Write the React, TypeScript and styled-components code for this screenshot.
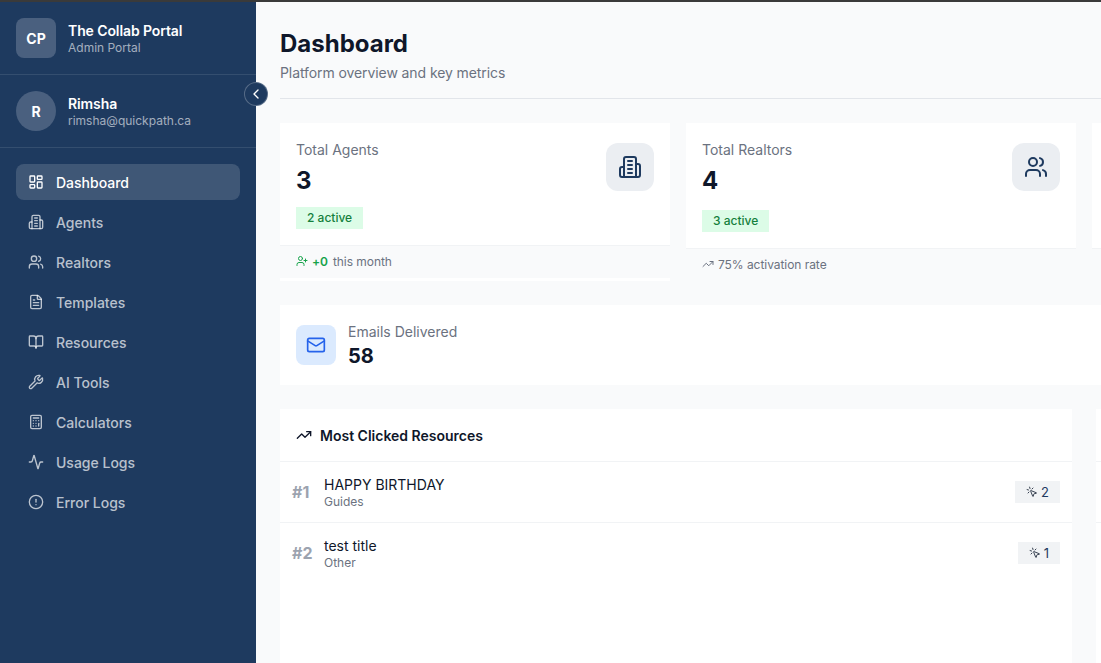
import React from 'react';
import styled, { createGlobalStyle } from 'styled-components';
import {
    Activity,
    BookOpen,
    Calculator,
    ChevronLeft,
    CircleAlert,
    FileText,
    LayoutDashboard,
    Mail,
    MousePointerClick,
    TrendingUp,
    UserPlus,
    Users,
    Wrench,
} from 'lucide-react';

const GlobalStyle = createGlobalStyle`
    html, body {
        margin: 0;
        height: 100%;
        overflow: hidden;
        background: #f9fafb;
    }
    body {
        font-family: Inter, "Liberation Sans", sans-serif;
    }
    * {
        box-sizing: border-box;
    }
`;

const Page = styled.div`
    width: 1101px;
    height: 663px;
    display: flex;
    flex-direction: column;
    overflow: hidden;
`;

const TopStrip = styled.div`
    height: 2px;
    flex: none;
    background: #3a3a3a;
`;

const Shell = styled.div`
    flex: 1;
    min-height: 0;
    display: flex;
    position: relative;
`;

const Sidebar = styled.aside`
    width: 256px;
    flex: none;
    background: #1e3a5f;
    color: #fff;
`;

const SideSection = styled.div`
    display: flex;
    align-items: center;
    gap: 12px;
    padding: 16px;
    height: 73px;
    border-bottom: 1px solid rgba(255, 255, 255, 0.1);
`;

const Avatar = styled.div<{ $round?: boolean }>`
    width: 40px;
    height: 40px;
    flex: none;
    display: flex;
    align-items: center;
    justify-content: center;
    background: #4a607f;
    border-radius: ${(p) => (p.$round ? '50%' : '8px')};
    font-size: 14px;
    font-weight: 700;
`;

const SideName = styled.div`
    font-size: 14px;
    line-height: 20px;
    font-weight: 600;
    letter-spacing: -0.1px;
`;

const SideSub = styled.div`
    font-size: 12px;
    line-height: 14px;
    color: rgba(255, 255, 255, 0.6);
`;

const Nav = styled.nav`
    display: flex;
    flex-direction: column;
    gap: 4px;
    padding: 16px;
`;

const NavItem = styled.a<{ $active?: boolean }>`
    height: 36px;
    display: flex;
    align-items: center;
    gap: 12px;
    padding: 0 12px;
    border-radius: 8px;
    font-size: 14px;
    font-weight: 500;
    color: ${(p) => (p.$active ? '#fff' : 'rgba(255, 255, 255, 0.7)')};
    background: ${(p) => (p.$active ? 'rgba(255, 255, 255, 0.15)' : 'transparent')};
`;

const Toggle = styled.button`
    position: absolute;
    left: 244px;
    top: 80px;
    width: 24px;
    height: 24px;
    padding: 0;
    display: flex;
    align-items: center;
    justify-content: center;
    border-radius: 50%;
    border: 1px solid rgba(255, 255, 255, 0.25);
    background: #1e3a5f;
    color: #fff;
`;

const Main = styled.main`
    flex: 1;
    min-width: 0;
    overflow: hidden;
    padding: 0 24px;
    background: #f9fafb;
`;

const Content = styled.div`
    width: 1608px;
`;

const Header = styled.header`
    height: 97px;
    padding-top: 26px;
    border-bottom: 1px solid #e2e5ea;
`;

const Title = styled.h1`
    margin: 0;
    font-size: 24px;
    line-height: 32px;
    font-weight: 700;
    color: #0f172a;
`;

const Subtitle = styled.p`
    margin: 3px 0 0;
    font-size: 14px;
    line-height: 20px;
    letter-spacing: -0.09px;
    color: #6b7280;
`;

const StatGrid = styled.div`
    display: grid;
    grid-template-columns: repeat(4, 390px);
    gap: 16px;
    margin-top: 24px;
`;

const StatCard = styled.section`
    background: #fff;
    display: flex;
    flex-direction: column;
    height: 158px;
`;

const StatBody = styled.div`
    display: flex;
    justify-content: space-between;
    align-items: flex-start;
    padding: 16px 16px 0;
`;

const StatLabel = styled.div`
    font-size: 14px;
    line-height: 20px;
    padding-top: 1px;
    color: #6b7280;
`;

const StatValue = styled.div`
    margin-top: 5px;
    font-size: 24px;
    line-height: 32px;
    font-weight: 700;
    color: #0f172a;
`;

const ActiveBadge = styled.span<{ $offset: number }>`
    display: inline-block;
    margin-top: ${(p) => p.$offset}px;
    padding: 0 11px;
    height: 22px;
    font-size: 12px;
    line-height: 22px;
    font-weight: 500;
    color: #15803d;
    background: #dcfce7;
`;

const IconTile = styled.div`
    width: 48px;
    height: 48px;
    margin-top: 4px;
    display: flex;
    align-items: center;
    justify-content: center;
    border-radius: 12px;
    background: #ebeef2;
    color: #1e3a5f;
`;

const StatFooter = styled.div<{ $below?: number }>`
    height: 33px;
    margin-top: auto;
    margin-bottom: ${(p) => p.$below ?? 0}px;
    display: flex;
    align-items: center;
    gap: 4px;
    padding: 0 16px 2px;
    border-top: 1px solid #f1f3f5;
    background: #f9fafb;
    font-size: 12px;
    letter-spacing: -0.05px;
    color: #6b7280;
`;

const Gain = styled.span`
    font-weight: 600;
    color: #16a34a;
    margin-right: 1px;
`;

const MailCard = styled.section`
    height: 80px;
    margin-top: 24px;
    padding: 0 16px;
    display: flex;
    align-items: center;
    gap: 12px;
    background: #fff;
`;

const MailTile = styled.div`
    width: 40px;
    height: 40px;
    display: flex;
    align-items: center;
    justify-content: center;
    border-radius: 8px;
    background: #dbeafe;
    color: #2563eb;
`;

const MailLabel = styled(StatLabel)`
    padding-top: 0;
    margin-bottom: 2px;
`;

const MailValue = styled.div`
    font-size: 20px;
    line-height: 24px;
    font-weight: 700;
    color: #0f172a;
`;

const Columns = styled.div`
    display: grid;
    grid-template-columns: repeat(2, 792px);
    gap: 24px;
    margin-top: 24px;
`;

const Panel = styled.section`
    background: #fff;
    height: 300px;
`;

const PanelHead = styled.div`
    height: 53px;
    display: flex;
    align-items: center;
    gap: 8px;
    padding: 0 16px;
    border-bottom: 1px solid #f1f3f5;
    font-size: 14px;
    font-weight: 600;
    color: #0f172a;
`;

const Row = styled.div<{ $last?: boolean }>`
    height: 61px;
    display: flex;
    align-items: center;
    padding: 0 12px;
    border-bottom: 1px solid ${(p) => (p.$last ? 'transparent' : '#f1f3f5')};
`;

const Rank = styled.span`
    width: 32px;
    font-size: 16px;
    font-weight: 700;
    color: #9ca3af;
`;

const RowText = styled.div`
    flex: 1;
`;

const RowTitle = styled.div`
    font-size: 14px;
    line-height: 20px;
    font-weight: 400;
    color: #0f172a;
`;

const RowSub = styled.div`
    font-size: 12px;
    line-height: 14px;
    color: #6b7280;
`;

const ClickBadge = styled.span`
    height: 22px;
    display: flex;
    align-items: center;
    gap: 3px;
    padding: 0 11px;
    background: #f1f3f5;
    font-size: 13px;
    font-weight: 400;
    color: #1e3a5f;
`;

// older lucide building-2, the one in the package has a door and fewer floors
const AgentsIcon: React.FC<{ size: number }> = ({ size }) => (
    <svg
        width={size}
        height={size}
        viewBox="0 0 24 24"
        fill="none"
        stroke="currentColor"
        strokeWidth={2}
        strokeLinecap="round"
        strokeLinejoin="round"
    >
        <path d="M6 22V4a2 2 0 0 1 2-2h8a2 2 0 0 1 2 2v18Z" />
        <path d="M6 12H4a2 2 0 0 0-2 2v6a2 2 0 0 0 2 2h2" />
        <path d="M18 9h2a2 2 0 0 1 2 2v9a2 2 0 0 1-2 2h-2" />
        <path d="M10 6h4" />
        <path d="M10 10h4" />
        <path d="M10 14h4" />
        <path d="M10 18h4" />
    </svg>
);

const navItems: { label: string; icon: React.FC<{ size: number }> }[] = [
    { label: 'Dashboard', icon: LayoutDashboard },
    { label: 'Agents', icon: AgentsIcon },
    { label: 'Realtors', icon: Users },
    { label: 'Templates', icon: FileText },
    { label: 'Resources', icon: BookOpen },
    { label: 'AI Tools', icon: Wrench },
    { label: 'Calculators', icon: Calculator },
    { label: 'Usage Logs', icon: Activity },
    { label: 'Error Logs', icon: CircleAlert },
];

const App: React.FC = (): JSX.Element => {
    return (
        <Page>
            <GlobalStyle />
            <TopStrip />
            <Shell>
                <Sidebar>
                    <SideSection>
                        <Avatar>CP</Avatar>
                        <div>
                            <SideName>The Collab Portal</SideName>
                            <SideSub>Admin Portal</SideSub>
                        </div>
                    </SideSection>
                    <SideSection>
                        <Avatar $round>R</Avatar>
                        <div>
                            <SideName>Rimsha</SideName>
                            <SideSub>rimsha@quickpath.ca</SideSub>
                        </div>
                    </SideSection>
                    <Nav>
                        {navItems.map(({ label, icon: Icon }, i) => (
                            <NavItem key={label} $active={i === 0}>
                                <Icon size={16} />
                                {label}
                            </NavItem>
                        ))}
                    </Nav>
                </Sidebar>
                <Toggle>
                    <ChevronLeft size={16} />
                </Toggle>
                <Main>
                    <Content>
                        <Header>
                            <Title>Dashboard</Title>
                            <Subtitle>Platform overview and key metrics</Subtitle>
                        </Header>
                        <StatGrid>
                            <StatCard>
                                <StatBody>
                                    <div>
                                        <StatLabel>Total Agents</StatLabel>
                                        <StatValue>3</StatValue>
                                        <ActiveBadge $offset={10}>2 active</ActiveBadge>
                                    </div>
                                    <IconTile>
                                        <AgentsIcon size={24} />
                                    </IconTile>
                                </StatBody>
                                <StatFooter $below={3}>
                                    <UserPlus size={12} color="#16a34a" />
                                    <Gain>+0</Gain> this month
                                </StatFooter>
                            </StatCard>
                            <StatCard>
                                <StatBody>
                                    <div>
                                        <StatLabel>Total Realtors</StatLabel>
                                        <StatValue>4</StatValue>
                                        <ActiveBadge $offset={13}>3 active</ActiveBadge>
                                    </div>
                                    <IconTile>
                                        <Users size={24} />
                                    </IconTile>
                                </StatBody>
                                <StatFooter>
                                    <TrendingUp size={12} />
                                    75% activation rate
                                </StatFooter>
                            </StatCard>
                            <StatCard>
                                <StatFooter />
                            </StatCard>
                            <StatCard>
                                <StatFooter />
                            </StatCard>
                        </StatGrid>
                        <MailCard>
                            <MailTile>
                                <Mail size={20} />
                            </MailTile>
                            <div>
                                <MailLabel>Emails Delivered</MailLabel>
                                <MailValue>58</MailValue>
                            </div>
                        </MailCard>
                        <Columns>
                            <Panel>
                                <PanelHead>
                                    <TrendingUp size={16} />
                                    Most Clicked Resources
                                </PanelHead>
                                <Row>
                                    <Rank>#1</Rank>
                                    <RowText>
                                        <RowTitle>HAPPY BIRTHDAY</RowTitle>
                                        <RowSub>Guides</RowSub>
                                    </RowText>
                                    <ClickBadge>
                                        <MousePointerClick size={12} color="#374151" />2
                                    </ClickBadge>
                                </Row>
                                <Row $last>
                                    <Rank>#2</Rank>
                                    <RowText>
                                        <RowTitle>test title</RowTitle>
                                        <RowSub>Other</RowSub>
                                    </RowText>
                                    <ClickBadge>
                                        <MousePointerClick size={12} color="#374151" />1
                                    </ClickBadge>
                                </Row>
                            </Panel>
                            <Panel>
                                <PanelHead />
                                <Row />
                            </Panel>
                        </Columns>
                    </Content>
                </Main>
            </Shell>
        </Page>
    );
};

export default App;
